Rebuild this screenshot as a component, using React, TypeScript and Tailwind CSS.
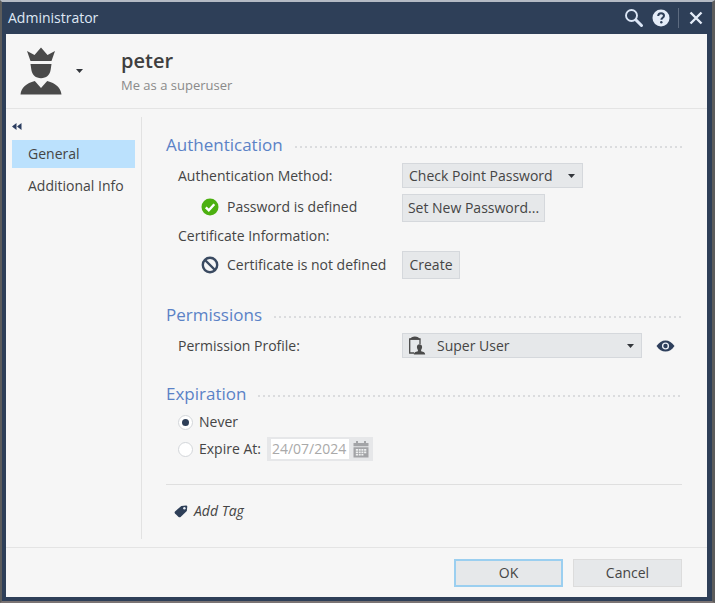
import { useState, type ReactNode } from "react";
import clsx from "clsx";

const tabs = ["General", "Additional Info"];

function Caret({ className }: { className?: string }) {
  return (
    <svg viewBox="0 0 7 4" className={clsx("h-1 w-[7px] fill-[#33363b]", className)} aria-hidden="true">
      <path d="M0 0h7L3.5 4z" />
    </svg>
  );
}

function SuperUserIcon() {
  return (
    <svg viewBox="0 0 42 48" className="h-12 w-[42px] fill-[#4a4a4a]" aria-hidden="true">
      <path d="M7 4l7.500 4L21 .6 27.500 8 35 4l-3.500 10h-21z" />
      <path d="M10.500 17h21l-.8 5.500c-.8 5.500-4.500 8.700-9.700 8.700s-8.900-3.200-9.700-8.700z" />
      <path d="M14.800 34L21 41l6.200-7c8.500 2.300 13.500 6.300 14.300 13.500H.5C1.300 40.300 6.300 36.300 14.800 34z" />
    </svg>
  );
}

function SearchIcon() {
  return (
    <svg viewBox="0 0 20 20" className="size-5" fill="none" stroke="#dbe6f6" aria-hidden="true">
      <circle cx="7.500" cy="7.500" r="5.500" strokeWidth="1.900" />
      <path d="M12 12l5.500 5.500" strokeWidth="3" strokeLinecap="round" />
    </svg>
  );
}

function HelpIcon() {
  return (
    <svg viewBox="0 0 18 18" className="size-[18px]" aria-hidden="true">
      <circle cx="9" cy="9" r="8.500" fill="#e4ecf8" />
      <path d="M6.200 7c0-1.800 1.200-2.800 2.900-2.800s2.900 1 2.900 2.500c0 2-2.600 2-2.600 4" fill="none" stroke="#2e3f58" strokeWidth="2" />
      <circle cx="9.300" cy="13.200" r="1.200" fill="#2e3f58" />
    </svg>
  );
}

function CloseIcon() {
  return (
    <svg viewBox="0 0 14 14" className="size-3.5" fill="none" stroke="#e4ecf8" strokeWidth="2.400" aria-hidden="true">
      <path d="M1.500 1.500l11 11M12.500 1.500l-11 11" />
    </svg>
  );
}

function CheckIcon() {
  return (
    <svg viewBox="0 0 18 18" className="size-[18px]" aria-hidden="true">
      <circle cx="9" cy="9" r="8.500" fill="#4cb010" />
      <path d="M4.800 9.300l3 3 5.500-6" fill="none" stroke="#fff" strokeWidth="2.400" />
    </svg>
  );
}

function BlockedIcon() {
  return (
    <svg viewBox="0 0 18 18" className="size-[18px]" fill="none" stroke="#3a4a61" strokeWidth="2.400" aria-hidden="true">
      <circle cx="9" cy="9" r="7.200" />
      <path d="M4 4l10 10" />
    </svg>
  );
}

function ProfileIcon() {
  return (
    <svg viewBox="0 0 18 19" className="h-[19px] w-[18px]" aria-hidden="true">
      <path d="M6 17H1.700V3H12v5" fill="none" stroke="#4a4a4a" strokeWidth="1.300" />
      <path d="M1.500 3.800C2.500 1.500 4.500.4 6.900.4s4.400 1.100 5.400 3.400z" fill="#4a4a4a" />
      <path d="M8.900 11c0-1.700 1-2.800 2.600-2.800S14.100 9.300 14.100 11c0 1.400-.7 2.200-1 3v1.200c2.600.5 4 1.300 4.100 3.300H5.800c.1-2 1.500-2.800 4.100-3.300V14c-.3-.8-1-1.600-1-3z" fill="#4a4a4a" />
    </svg>
  );
}

function EyeIcon() {
  return (
    <svg viewBox="0 0 19 12" className="h-3 w-[19px]" aria-hidden="true">
      <path d="M.5 6C3 2.300 6 .4 9.500.4S16 2.300 18.500 6C16 9.700 13 11.600 9.500 11.600S3 9.700.5 6z" fill="#2e3f5c" />
      <circle cx="9.500" cy="6" r="2.900" fill="none" stroke="#e9eef6" strokeWidth="1.400" />
    </svg>
  );
}

function CalendarIcon() {
  return (
    <svg viewBox="0 0 16 17" className="h-[17px] w-4" aria-hidden="true">
      <path d="M.5 2h15v3.200H.5zM3 0h2v3H3zM11 0h2v3h-2zM.5 6.200h15V16.500H.5z" fill="#a3a4a7" />
      <path d="M2.800 8h2.200v1.800H2.800zM5.700 8h2v1.800h-2zM8.400 8h2v1.800h-2zM11.100 8h2.200v1.800h-2.200zM2.800 10.500h2.200v1.800H2.800zM5.700 10.500h2v1.800h-2zM8.400 10.500h2v1.800h-2zM11.100 10.500h2.200v1.800h-2.200zM2.800 13h2.200v1.600H2.800zM5.700 13h2v1.600h-2zM8.400 13h2v1.600h-2z" fill="#eeeff0" />
    </svg>
  );
}

function TagIcon() {
  return (
    <svg viewBox="0 0 14 13" className="h-[13px] w-3.5" aria-hidden="true">
      <path d="M7.300.9L12 .5q1.300 0 1.300 1.200L12.800 6 6.600 11.900q-1 .9-2 0L1 8.400q-.9-1 0-2z" fill="#2e3f58" />
      <circle cx="10.400" cy="3.300" r="1.200" fill="#e9eef6" />
    </svg>
  );
}

function Section({ title, className, children }: { title: string; className?: string; children: ReactNode }) {
  return (
    <section className={className}>
      <div className="flex items-center gap-3">
        <h2 className="text-[17px] leading-6 text-[#5b82c6]">{title}</h2>
        <div className="mt-1 h-0.5 flex-1 bg-[repeating-linear-gradient(90deg,#dbdcde_0_2px,transparent_2px_5px)]" />
      </div>
      {children}
    </section>
  );
}

function Button({ className, children }: { className?: string; children: ReactNode }) {
  return (
    <button type="button" className={clsx("h-7 bg-[#e6e8ea] whitespace-nowrap", className)}>
      {children}
    </button>
  );
}

function Radio({ label, checked, onChange }: { label: string; checked: boolean; onChange: () => void }) {
  return (
    <label className="flex items-center gap-1.5">
      <input
        type="radio"
        name="expiration"
        checked={checked}
        onChange={onChange}
        className="grid size-[15px] appearance-none place-content-center rounded-full border border-[#d3d6da] bg-white before:size-[7px] before:rounded-full checked:before:bg-[#2e3f58]"
      />
      {label}
    </label>
  );
}

export default function App() {
  const [tab, setTab] = useState("General");
  const [expires, setExpires] = useState(false);

  return (
    <div className="flex min-h-screen flex-col border-2 border-r-3 border-t-[#b4bac4] border-r-[#5c5c5c] border-b-[#7b7474] border-l-[#5c5c5c] bg-[#2e3f58] pr-[5px] pb-1 pl-1 font-['Open_Sans','Noto_Sans',sans-serif] text-[14px] leading-5 text-[#454545]">
      <header className="flex h-8 items-center pl-0.5 text-[#dfe8f5]">
        <h1 className="flex-1">Administrator</h1>
        <div className="flex items-center gap-2 pr-1">
          <button type="button" aria-label="Search"><SearchIcon /></button>
          <button type="button" aria-label="Help"><HelpIcon /></button>
          <span className="h-5 w-px bg-[#5d6b80]" />
          <button type="button" aria-label="Close" className="pl-0.5"><CloseIcon /></button>
        </div>
      </header>

      <div className="flex flex-1 flex-col bg-[#f6f6f6]">
        <div className="flex h-[75px] items-center border-b border-[#e4e4e4] pl-3.5">
          <button type="button" aria-label="Choose icon" className="flex items-center gap-3.5">
            <SuperUserIcon />
            <Caret />
          </button>
          <div className="pl-[38px]">
            <div className="text-[20px] leading-7 font-semibold text-[#3f3f3f]">peter</div>
            <div className="text-[13px] leading-5 text-[#8a8a8a]">Me as a superuser</div>
          </div>
        </div>

        <div className="flex flex-1 py-2">
          <nav className="flex w-[136px] flex-col border-r border-[#e2e2e2] pr-1.5 pl-1.5">
            <button type="button" aria-label="Collapse" className="mb-2 flex h-[15px] items-end">
              <svg viewBox="0 0 10 7" className="mb-0.5 h-[7px] w-2.5 fill-[#2b3d60]" aria-hidden="true">
                <path d="M4.500 0v7L0 3.500zM9.500 0v7L5 3.500z" />
              </svg>
            </button>
            {tabs.map((name) => (
              <button
                key={name}
                type="button"
                onClick={() => setTab(name)}
                className={clsx("mb-1 h-7 pl-4 text-left whitespace-nowrap", tab === name && "bg-[#bbe1fd]")}
              >
                {name}
              </button>
            ))}
          </nav>

          <main className="flex-1 pt-4 pr-[25px] pl-6">
            <Section title="Authentication">
              <div className="mt-1.5 grid grid-cols-[224px_1fr] items-center pl-3">
                <label htmlFor="method">Authentication Method:</label>
                <div className="relative w-[181px]">
                  <select id="method" className="h-[25px] w-full appearance-none border border-[#d5d8dc] bg-[#e6e8ea] pl-1.5">
                    <option>Check Point Password</option>
                  </select>
                  <Caret className="pointer-events-none absolute top-[11px] right-2" />
                </div>
                <div className="flex items-center gap-2 pt-1 pl-[23px]">
                  <CheckIcon />
                  Password is defined
                </div>
                <Button className="mt-1.5 w-[143px] justify-self-start border border-[#d5d8dc]">Set New Password...</Button>
                <div className="col-span-2 h-[29px] pt-1">Certificate Information:</div>
                <div className="flex items-center gap-2 pl-[23px]">
                  <BlockedIcon />
                  Certificate is not defined
                </div>
                <Button className="w-[58px] justify-self-start border border-[#d5d8dc]">Create</Button>
              </div>
            </Section>

            <Section title="Permissions" className="mt-6">
              <div className="mt-1.5 grid grid-cols-[224px_1fr] items-center pl-3">
                <label htmlFor="profile">Permission Profile:</label>
                <div className="flex items-center gap-3.5">
                  <div className="relative w-60">
                    <select id="profile" className="h-[25px] w-full appearance-none border border-[#d5d8dc] bg-[#e6e8ea] pl-[34px]">
                      <option>Super User</option>
                    </select>
                    <span className="pointer-events-none absolute top-[3px] left-1.5"><ProfileIcon /></span>
                    <Caret className="pointer-events-none absolute top-[11px] right-2" />
                  </div>
                  <button type="button" aria-label="View profile"><EyeIcon /></button>
                </div>
              </div>
            </Section>

            <Section title="Expiration" className="mt-6">
              <div className="mt-0.5 flex flex-col pl-3">
                <div className="flex h-7 items-center">
                  <Radio label="Never" checked={!expires} onChange={() => setExpires(false)} />
                </div>
                <div className="flex h-[26px] items-center gap-1.5">
                  <Radio label="Expire At:" checked={expires} onChange={() => setExpires(true)} />
                  <div className="flex h-6 items-center bg-[#e6e7e9] px-1">
                    <input
                      type="text"
                      aria-label="Expiration date"
                      defaultValue="24/07/2024"
                      disabled={!expires}
                      className="h-5 w-[78px] bg-white pl-px disabled:text-[#a9a9a9]"
                    />
                    <button type="button" aria-label="Pick a date" className="pl-1"><CalendarIcon /></button>
                  </div>
                </div>
              </div>
            </Section>

            <div className="mt-[22px] border-t border-[#dfdfdf] pt-4 pl-2">
              <button type="button" className="flex items-center gap-1.5 italic">
                <TagIcon />
                Add Tag
              </button>
            </div>
          </main>
        </div>

        <footer className="flex h-[50px] items-center justify-end gap-2.5 border-t border-[#e4e4e4] pr-[25px]">
          <Button className="w-[109px] border-2 border-[#9bcff0]">OK</Button>
          <Button className="w-[109px] border border-[#dcdcdc]">Cancel</Button>
        </footer>
      </div>
    </div>
  );
}
